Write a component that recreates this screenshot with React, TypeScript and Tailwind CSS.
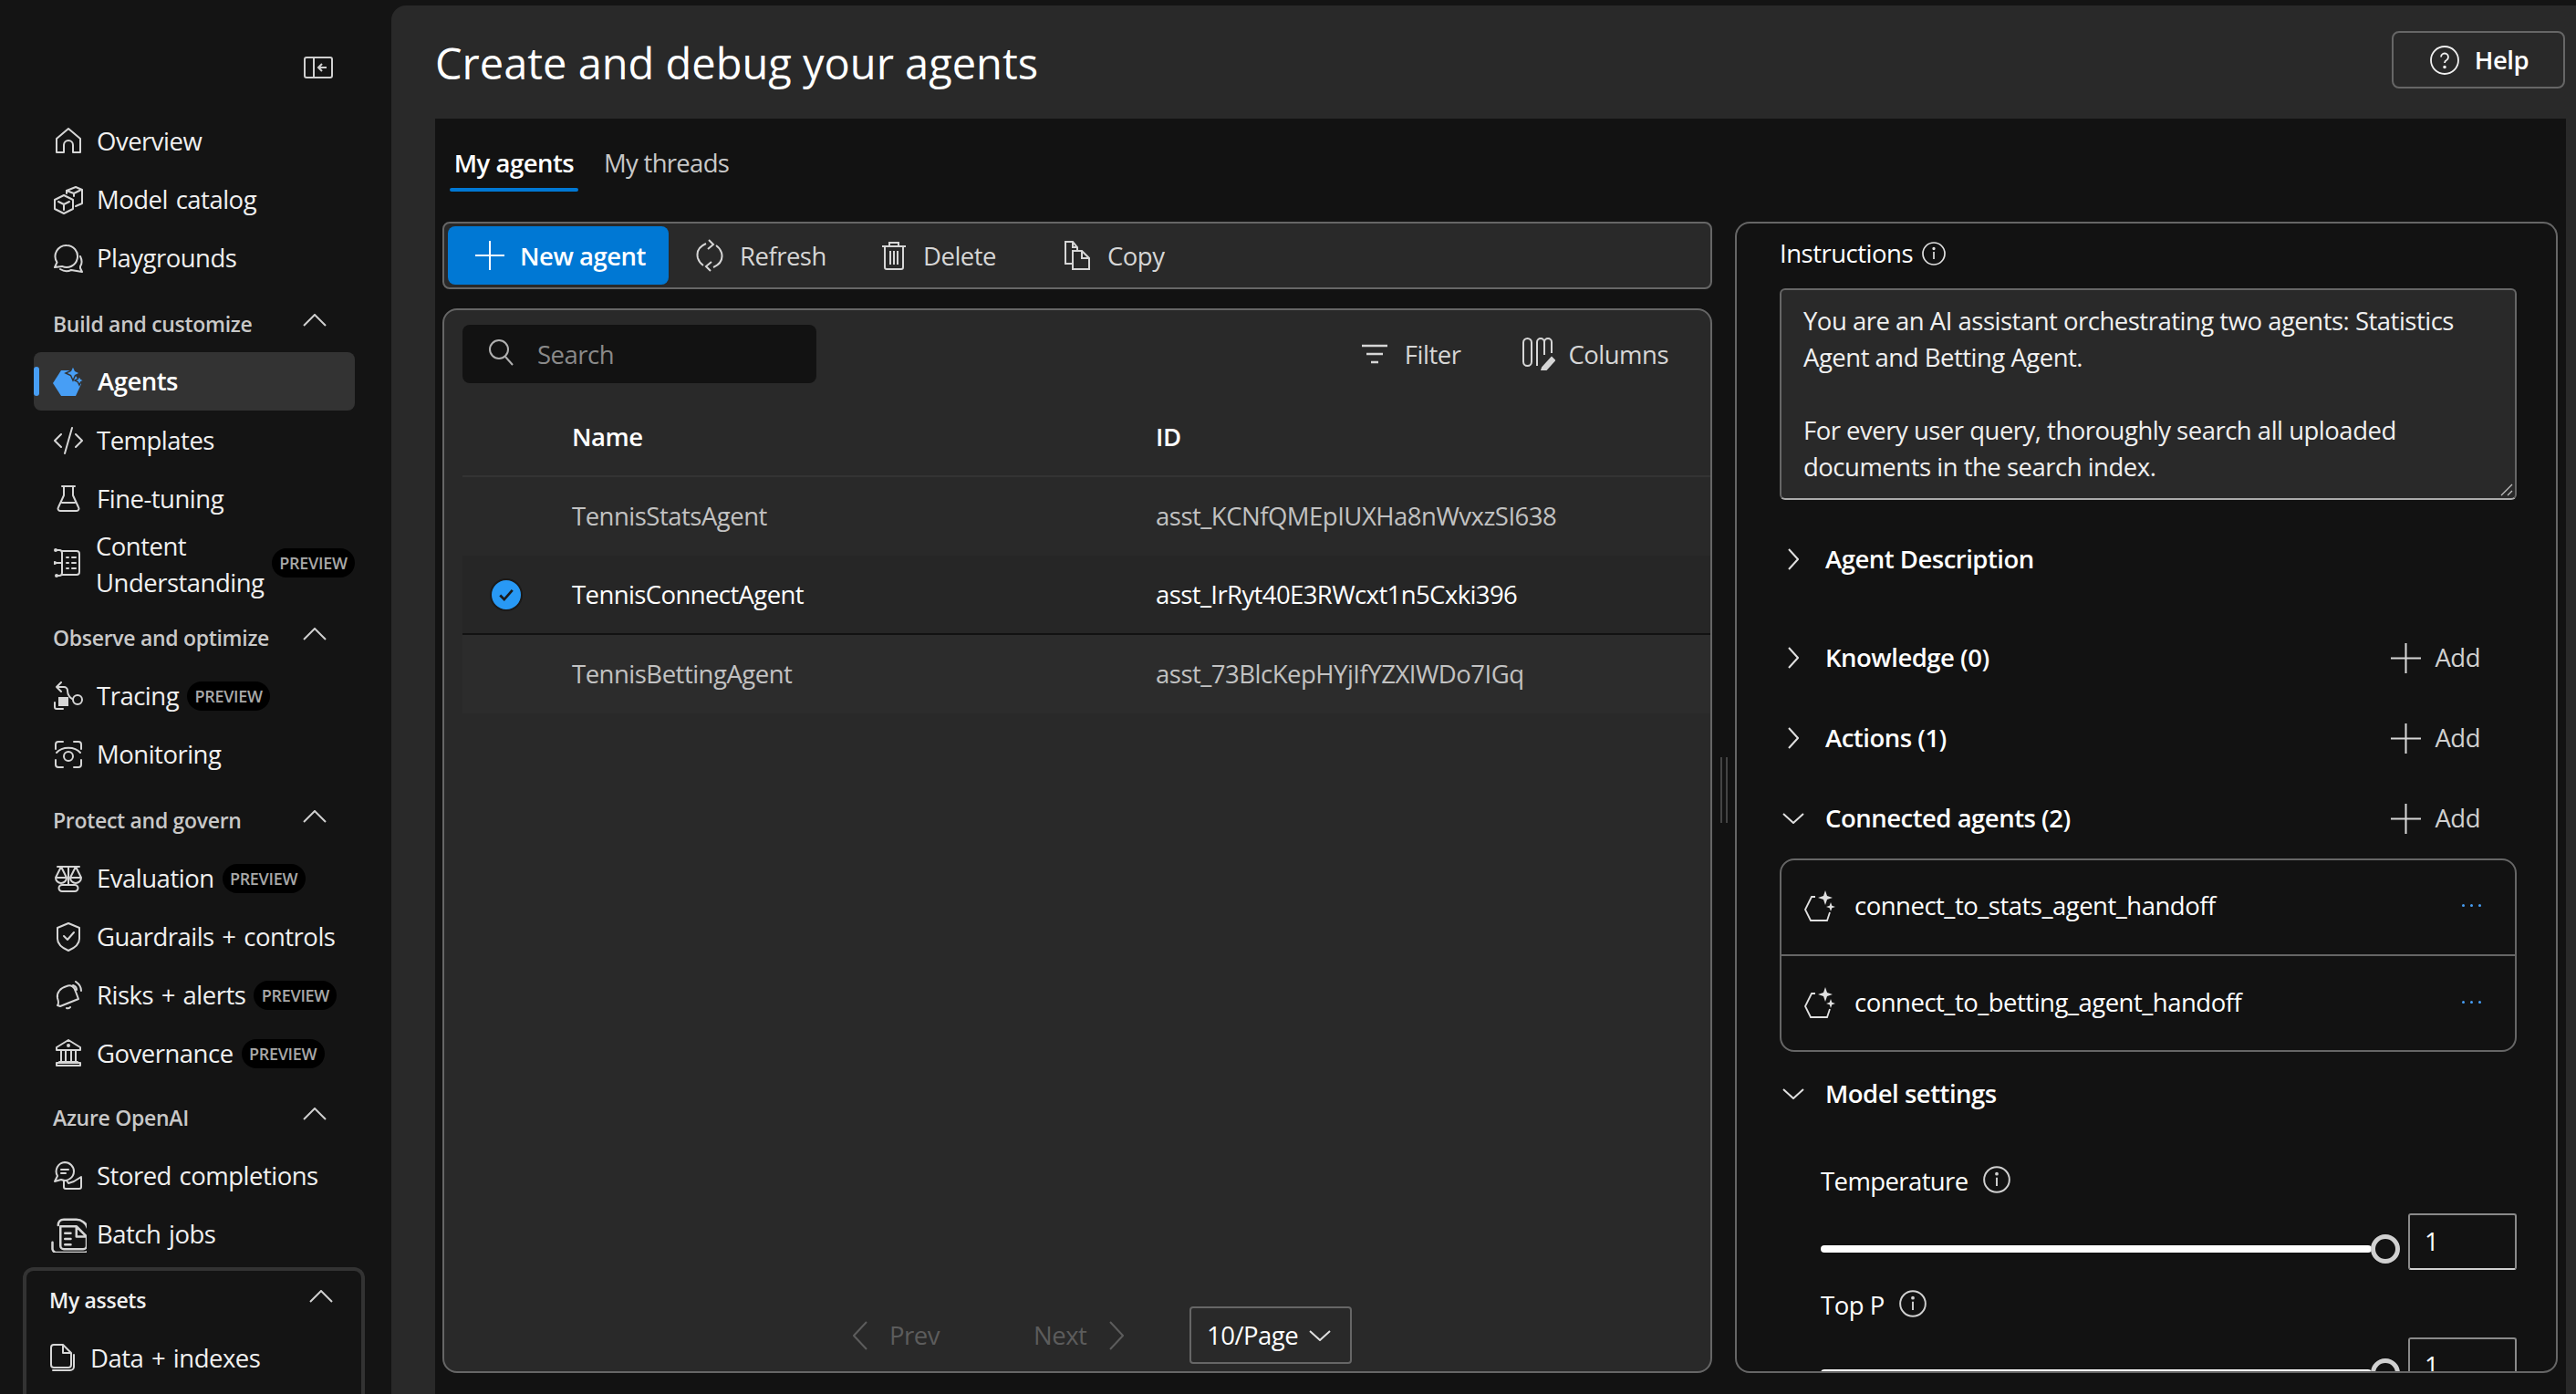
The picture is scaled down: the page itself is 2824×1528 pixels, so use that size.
import React from "react";

const Ic = ({ children, className = "w-8 h-8" }: { children: React.ReactNode; className?: string }) => (
  <svg viewBox="0 0 32 32" fill="none" stroke="currentColor" strokeWidth="2" strokeLinecap="round" strokeLinejoin="round" className={`shrink-0 ${className}`}>
    {children}
  </svg>
);

const Home = () => <Ic><path d="M3 28V13L16 2l13 11v15h-8v-8a5 5 0 0 0-10 0v8z" /></Ic>;
const Catalog = () => <Ic><path d="M1 16l10-5 10 5v10l-10 5-10-5z" /><path d="M5 18l6 3 6-3M11 21v6" /><path d="M14 9V6l10-4 7 3v15l-7 3" /><path d="M14 6l8 3 7-3.500M22 9v3" /></Ic>;
const Chat = () => <Ic><path d="M14 2a12 12 0 1 1-5 22.900L1 26l2.500-5.500A12 12 0 0 1 14 2z" /><path d="M7 28c3 2 8 3 12 1l12 2-2-4v-2c2-3 2-7 0-11" /></Ic>;
const Code = () => <Ic><path d="M8 9l-7 7 7 7M24 9l7 7-7 7M20 2l-8 28" /></Ic>;
const Flask = () => <Ic><path d="M9 2h14M11 2v10L5 25a2.500 2.500 0 0 0 2 4h18a2.500 2.500 0 0 0 2-4l-6-13V2M9 20h14" /></Ic>;
const ContentU = () => <Ic><path d="M3 2h3a3 3 0 0 1 3 3v22a3 3 0 0 1-3 3H3M1 16h8" /><path d="M9 3h16a3 3 0 0 1 3 3v20a3 3 0 0 1-3 3H9" /><path d="M14 10h2M20 10h4M14 16h2M20 16h4M14 22h2M20 22h4" /><circle cx="2" cy="2" r="1" fill="currentColor" /><circle cx="1" cy="16" r="1" fill="currentColor" /><circle cx="3" cy="30" r="1" fill="currentColor" /></Ic>;
const Tracing = () => <Ic><path d="M8 1L3 6l5 5M3 6h8a4 4 0 0 1 4 4c0 5 2 7 5 9" /><circle cx="26" cy="20" r="5" /><rect x="5" y="17" width="11" height="10" fill="currentColor" stroke="none" /><path d="M1 23v5a2 2 0 0 0 2 2h7" /></Ic>;
const Monitor = () => <Ic><path d="M10 2H5a3 3 0 0 0-3 3v5M22 2h5a3 3 0 0 1 3 3v5M10 30H5a3 3 0 0 1-3-3v-5M22 30h5a3 3 0 0 0 3-3v-5" /><path d="M3 14c6-7 20-7 26 0" /><circle cx="16" cy="18" r="5" /></Ic>;
const Scale = () => <Ic><path d="M4 3h24M16 3v20M9 23h14a3 3 0 0 1 0 7H9a3 3 0 0 1 0-7zM8 3L2 15h12zM24 3l-6 12h12zM2 15a6 6 0 0 0 12 0M18 15a6 6 0 0 0 12 0" /></Ic>;
const Shield = () => <Ic><path d="M16 1l12 5v12c0 6-5 10-12 13C9 28 4 24 4 18V6z" /><path d="M11 15l4 4 7-8" /></Ic>;
const Bell = () => <Ic><path d="M14 6c5-2 9 1 10 6l3 8-20 8-3-1c2-2 1-5 0-8-1-6 3-11 10-13z" /><path d="M14 30c2 1 3 0 4-1M24 1c3 2 6 5 6 10M21 5c3 1 4 3 4 5" /></Ic>;
const Bank = () => <Ic><path d="M16 1L3 9v3h26V9zM3 29v-3h26v3zM6 25h20M8 12v13M13 12v13M19 12v13M24 12v13" /><circle cx="16" cy="7" r="1" fill="currentColor" /></Ic>;
const Stored = () => <Ic><path d="M12 1a10 10 0 0 1 10 10 10 10 0 0 1-14 9l-7 2 3-6A10 10 0 0 1 12 1z" /><path d="M8 9h8M8 13h5" /><path d="M14 21l2 3 6-2 8-5v11a2 2 0 0 1-2 2H13a2 2 0 0 1-2-2v-7M30 17l-8 5" /></Ic>;
const Batch = () => (
  <Ic className="w-10 h-10"><path d="M7 8c0-3 2-5 5-5h11c4 0 9 3 10 8" /><path d="M9 9h14l9 9v8a3 3 0 0 1-3 3H12a3 3 0 0 1-3-3zM23 9v9h9M13 15h5M13 20h5M13 25h5" /><path d="M2 23v6a4 4 0 0 0 4 3h24a4 4 0 0 0 4-4v-6" /></Ic>
);
const Docs = () => <Ic><path d="M2 4a3 3 0 0 1 3-3h10l9 9v13a3 3 0 0 1-3 3H5a3 3 0 0 1-3-3zM15 1v9h9" /><path d="M4 29h19a4 4 0 0 0 4-4V12" /></Ic>;
const AgentFill = () => (
  <svg viewBox="0 0 34 34" className="w-[34px] h-[34px] shrink-0" fill="#479ef5">
    <path d="M9 5h12L31 20l-6 13H9L0 19z" />
    <path d="M22 0l2.500 5.500L30 8l-5.500 2.500L22 16l-2.500-5.500L14 8l5.500-2.500z" stroke="#333" strokeWidth="1.500" />
    <path d="M29 11l1.700 3.300L34 16l-3.300 1.700L29 21l-1.700-3.300L24 16l3.300-1.700z" stroke="#333" strokeWidth="1.500" />
  </svg>
);
const AgentOutline = () => (
  <svg viewBox="0 0 34 34" className="w-[34px] h-[34px] shrink-0" fill="none" stroke="#e0e0e0" strokeWidth="1.800">
    <path d="M12 7H8L1 21l6 12h18l3-9" />
    <path d="M23 0l2 6 6 2-6 2-2 6-2-6-6-2 6-2z" fill="#e0e0e0" stroke="none" />
    <path d="M29 13l1.300 3.700L34 18l-3.700 1.300L29 23l-1.300-3.700L24 18l3.700-1.300z" fill="#e0e0e0" stroke="none" />
  </svg>
);
const Up = ({ className = "" }: { className?: string }) => (
  <svg viewBox="0 0 26 14" fill="none" stroke="#d0d0d0" strokeWidth="2" className={`w-[26px] h-[14px] shrink-0 ${className}`}><path d="M1 13L13 1l12 12" /></svg>
);
const Right = () => (
  <svg viewBox="0 0 12 24" fill="none" stroke="#e0e0e0" strokeWidth="2" className="w-3 h-6 shrink-0"><path d="M1 1l10 11L1 23" /></svg>
);
const Down = () => (
  <svg viewBox="0 0 24 12" fill="none" stroke="#e0e0e0" strokeWidth="2" className="w-6 h-3 shrink-0"><path d="M1 1l11 10L23 1" /></svg>
);
const Plus = ({ c = "#d6d6d6", size = "w-8 h-8" }: { c?: string; size?: string }) => (
  <svg viewBox="0 0 32 32" fill="none" stroke={c} strokeWidth="2" className={`shrink-0 ${size}`}><path d="M16 0v32M0 16h32" /></svg>
);
const Info = ({ className = "w-[26px] h-[26px]", c = "#e0e0e0" }: { className?: string; c?: string }) => (
  <svg viewBox="0 0 26 26" fill="none" stroke={c} strokeWidth="1.700" className={`shrink-0 ${className}`}>
    <circle cx="13" cy="13" r="12" />
    <path d="M13 11v8" />
    <circle cx="13" cy="7.500" r="0.800" fill={c} />
  </svg>
);

const Preview = ({ className = "" }: { className?: string }) => (
  <span className={`inline-flex items-center justify-center w-[91px] h-8 rounded-full bg-black text-[#a8a8a8] text-[18px] font-semibold tracking-[-0.3px] [word-spacing:0] shrink-0 ${className}`}>PREVIEW</span>
);

const Item = ({ icon, label, badge, active }: { icon: React.ReactNode; label: string; badge?: boolean; active?: boolean }) => (
  <div className={`relative flex items-center h-16 pl-[22px] rounded-lg text-[27.500px] tracking-[-0.5px] [word-spacing:2px] whitespace-nowrap ${active ? "-mt-px mb-px bg-[#333333] text-white font-semibold" : "text-[#f0f0f0]"}`}>
    {active && <span className="absolute left-0 top-4 w-[6px] h-8 rounded-full bg-[#479ef5]" />}
    <span className={`w-8 flex justify-center ${active ? "mr-4" : "mr-[15px] text-[#d6d6d6]"}`}>{icon}</span>
    <span>{label}</span>
    {badge && <Preview className="ml-[9px]" />}
  </div>
);

const Section = ({ label, className = "mt-2" }: { label: string; className?: string }) => (
  <div className={`flex items-center justify-between h-16 pl-[21px] pr-[31px] text-[23px] font-semibold tracking-[-0.3px] text-[#c8c8c8] whitespace-nowrap ${className}`}>
    <span>{label}</span>
    <Up className="-mt-2" />
  </div>
);

const Sidebar = () => (
  <aside className="w-[429px] shrink-0 flex flex-col overflow-hidden">
    <div className="h-[123px] shrink-0 flex justify-end pr-[64px] pt-[62px]">
      <svg viewBox="0 0 32 24" fill="none" stroke="#d0d0d0" strokeWidth="2" className="w-8 h-6"><rect x="1" y="1" width="30" height="22" rx="2" /><path d="M11 1v22M25 12H16M20 8l-4 4 4 4" /></svg>
    </div>
    <div className="w-[389px] pl-[37px]">
      <Item icon={<Home />} label="Overview" />
      <Item icon={<Catalog />} label="Model catalog" />
      <Item icon={<Chat />} label="Playgrounds" />
      <Section label="Build and customize" />
      <Item icon={<AgentFill />} label="Agents" active />
      <Item icon={<Code />} label="Templates" />
      <Item icon={<Flask />} label="Fine-tuning" />
      <div className="flex items-center h-20 pl-[22px] text-[27.500px] tracking-[-0.5px] leading-[40px] text-[#f0f0f0]">
        <span className="w-8 mr-[14px] text-[#d6d6d6] -mt-1"><ContentU /></span>
        <span className="flex-1 whitespace-nowrap">Content<br />Understanding</span>
        <Preview className="-mt-1" />
      </div>
      <Section label="Observe and optimize" />
      <Item icon={<Tracing />} label="Tracing" badge />
      <Item icon={<Monitor />} label="Monitoring" />
      <Section label="Protect and govern" />
      <Item icon={<Scale />} label="Evaluation" badge />
      <Item icon={<Shield />} label="Guardrails + controls" />
      <Item icon={<Bell />} label="Risks + alerts" badge />
      <Item icon={<Bank />} label="Governance" badge />
      <Section label="Azure OpenAI" className="mt-[6px]" />
      <Item icon={<Stored />} label="Stored completions" />
      <Item icon={<Batch />} label="Batch jobs" />
    </div>
    <div className="ml-[25px] w-[375px] mt-1 flex-1 border-4 border-b-0 border-[#333333] rounded-t-xl">
      <div className="flex items-center justify-between h-[64px] pl-[25px] pr-[31px] text-[23px] font-semibold tracking-[-0.3px] text-[#f0f0f0]">
        <span>My assets</span>
        <Up className="-mt-2" />
      </div>
      <div className="flex items-center h-16 pl-[25px] text-[27.500px] tracking-[-0.5px] [word-spacing:2px] text-[#f0f0f0] whitespace-nowrap">
        <span className="w-[26px] mr-[19px] text-[#d6d6d6]"><Docs /></span>
        <span>Data + indexes</span>
      </div>
    </div>
  </aside>
);

const ToolBtn = ({ icon, label, w }: { icon: React.ReactNode; label: string; w: string }) => (
  <div className={`flex items-center text-[27.500px] font-medium tracking-[-0.5px] text-[#d6d6d6] whitespace-nowrap ${w}`}>
    {icon}
    <span className="pt-[2px]">{label}</span>
  </div>
);

const Row = ({ name, id, selected, dim }: { name: string; id: string; selected?: boolean; dim?: boolean }) => (
  <div className={`flex items-center text-[27.500px] ${selected ? "h-[87px] bg-[#262626] border-b-2 border-[#121212] text-white tracking-[-0.6px]" : `h-[86px] ${dim ? "bg-[#2c2c2c]" : ""} text-[#c2c2c2] tracking-[-0.5px]`}`}>
    <div className="w-[120px] pl-[30px] shrink-0">
      {selected && (
        <span className="flex items-center justify-center w-9 h-9 rounded-full bg-[#2899f5] border-2 border-[#1a1a1a]">
          <svg viewBox="0 0 16 16" fill="none" stroke="#1a1a1a" strokeWidth="2.400" className="w-[18px] h-[18px]"><path d="M2 8.500l4 4L14 3.500" /></svg>
        </span>
      )}
    </div>
    <div className="w-[640px] shrink-0">{name}</div>
    <div>{id}</div>
  </div>
);

const AgentsTable = () => (
  <div className="flex-1 min-h-0 flex flex-col border-2 border-[#666666] rounded-2xl bg-[#292929] pl-5 pt-4">
    <div className="flex items-center h-16 shrink-0">
      <div className="flex items-center w-[388px] h-16 rounded-lg bg-[#121212] pl-7 text-[27.500px] tracking-[-0.5px] text-[#8a8a8a]">
        <svg viewBox="0 0 28 30" fill="none" stroke="#b0b0b0" strokeWidth="2" className="w-7 h-[30px] mr-[26px] -mt-1 shrink-0"><circle cx="12" cy="12" r="10" /><path d="M19 20l8 9" /></svg>
        <span className="pt-[2px]">Search</span>
      </div>
      <div className="ml-auto flex items-center">
        <ToolBtn w="mr-[68px]" label="Filter" icon={
          <svg viewBox="0 0 28 22" fill="none" stroke="#d6d6d6" strokeWidth="2.500" className="w-7 h-[22px] mr-[19px]"><path d="M0 2h28M5 11h18M10 20h8" /></svg>
        } />
        <ToolBtn w="mr-[46px]" label="Columns" icon={
          <svg viewBox="0 0 36 36" fill="none" stroke="#d6d6d6" strokeWidth="2" className="w-9 h-9 mr-[14px]"><rect x="1" y="1" width="9" height="30" rx="4.500" /><path d="M16 31V5a4 4 0 0 1 8 0v14M24 5a4 4 0 0 1 8 0v12" /><path d="M22 33l10-11 3 3-9 10-5 1z" fill="#d6d6d6" /></svg>
        } />
      </div>
    </div>
    <div className="flex items-center h-[86px] mt-[17px] border-b-2 border-[#333333] text-[27.500px] font-semibold tracking-[-0.5px] text-white shrink-0">
      <div className="w-[120px]" />
      <div className="w-[640px]">Name</div>
      <div>ID</div>
    </div>
    <Row name="TennisStatsAgent" id="asst_KCNfQMEpIUXHa8nWvxzSI638" />
    <Row name="TennisConnectAgent" id="asst_IrRyt40E3RWcxt1n5Cxki396" selected />
    <Row name="TennisBettingAgent" id="asst_73BlcKepHYjIfYZXIWDo7IGq" dim />
    <div className="mt-auto mb-2 h-[63px] flex items-center pl-[428px] text-[27.500px] tracking-[-0.5px] text-[#5c5c5c]">
      <svg viewBox="0 0 16 32" fill="none" stroke="#5c5c5c" strokeWidth="2" className="w-4 h-8 mr-[24px]"><path d="M15 1L1 16l14 15" /></svg>
      <span className="w-[158px]">Prev</span>
      <span className="w-[83px]">Next</span>
      <svg viewBox="0 0 16 32" fill="none" stroke="#5c5c5c" strokeWidth="2" className="w-4 h-8"><path d="M1 1l14 15L1 31" /></svg>
      <div className="ml-[72px] flex items-center w-[178px] h-[63px] border-2 border-[#666666] rounded-[4px] pl-[17px] text-white">
        <span className="w-[112px]">10/Page</span>
        <Down />
      </div>
    </div>
  </div>
);

const Expand = ({ label, open, add, className }: { label: string; open?: boolean; add?: boolean; className: string }) => (
  <div className={`flex items-center h-16 text-[27.500px] font-semibold tracking-[-0.5px] text-white whitespace-nowrap ${className}`}>
    <span className="w-[50px] flex justify-start pl-[3px]">{open ? <Down /> : <span className="pl-[6px]"><Right /></span>}</span>
    <span>{label}</span>
    {add && (
      <span className="ml-auto mr-[40px] flex items-center text-[#d0d0d0] font-medium">
        <Plus size="w-[33px] h-[33px] mr-[15px]" />
        <span>Add</span>
      </span>
    )}
  </div>
);

const ConnRow = ({ label, border }: { label: string; border?: boolean }) => (
  <div className={`flex items-center h-[105px] pl-[25px] pr-[37px] text-[27.500px] tracking-[-0.5px] text-white ${border ? "border-b-2 border-[#666666]" : ""}`}>
    <span className="-mt-1 mr-[21px]"><AgentOutline /></span>
    <span className="-mt-1">{label}</span>
    <span className="ml-auto flex gap-[6px] -mt-1">
      <i className="w-[3px] h-[3px] rounded-full bg-[#479ef5]" />
      <i className="w-[3px] h-[3px] rounded-full bg-[#479ef5]" />
      <i className="w-[3px] h-[3px] rounded-full bg-[#479ef5]" />
    </span>
  </div>
);

const SliderRow = ({ className = "" }: { className?: string }) => (
  <div className={`flex items-start shrink-0 pl-[45px] ${className}`}>
    <div className="flex-1 flex items-center h-8 mt-[23px]">
      <div className="flex-1 h-2 rounded-full bg-white" />
      <div className="w-8 h-8 -ml-px rounded-full border-[5px] border-[#d0d0d0] bg-[#121212]" />
    </div>
    <div className="ml-[9px] w-[119px] h-[62px] border-2 border-[#d0d0d0] border-t-[#8a8a8a] border-x-[#8a8a8a] rounded-[3px] pl-[16px] leading-[58px] text-[27.500px] text-white">1</div>
  </div>
);

const SidePanel = () => (
  <section className="w-[902px] shrink-0 border-2 border-[#666666] rounded-2xl overflow-hidden pl-[47px] pr-[43px] pt-[13px]">
    <div className="flex items-center h-10 text-[27.500px] tracking-[-0.5px] text-white">
      <span>Instructions</span>
      <Info className="w-[26px] h-[26px] ml-[10px]" />
    </div>
    <div className="relative mt-[18px] h-[232px] bg-[#292929] border-2 border-[#666666] border-b-[#aaaaaa] rounded-md pl-[24px] pt-[14px] text-[27.500px] leading-[40px] tracking-[-0.5px] text-[#f0f0f0] whitespace-nowrap">
      You are an AI assistant orchestrating two agents: Statistics<br />
      Agent and Betting Agent.<br />
      <br />
      For every user query, thoroughly search all uploaded<br />
      documents in the search index.
      <svg viewBox="0 0 14 14" fill="none" stroke="#c0c0c0" strokeWidth="1.300" className="absolute right-[2px] bottom-[2px] w-[14px] h-[14px]"><path d="M1 13L13 1M8 13l5-5" /></svg>
    </div>
    <Expand label="Agent Description" className="mt-[33px]" />
    <Expand label="Knowledge (0)" add className="mt-[44px]" />
    <Expand label="Actions (1)" add className="mt-[24px]" />
    <Expand label="Connected agents (2)" open add className="mt-[24px]" />
    <div className="mt-3 h-[212px] border-2 border-[#666666] rounded-2xl">
      <ConnRow label="connect_to_stats_agent_handoff" border />
      <ConnRow label="connect_to_betting_agent_handoff" />
    </div>
    <Expand label="Model settings" open className="mt-[14px]" />
    <div className="flex items-center h-10 mt-[44px] pl-[45px] text-[27.500px] font-medium tracking-[-0.6px] text-white">
      <span>Temperature</span>
      <Info className="w-[30px] h-[30px] ml-[16px] -mt-1" c="#d0d0d0" />
    </div>
    <SliderRow className="mt-[15px]" />
    <div className="flex items-center h-10 mt-[19px] pl-[45px] text-[27.500px] font-medium tracking-[-0.5px] text-white">
      <span>Top P</span>
      <Info className="w-[30px] h-[30px] ml-[16px] -mt-1" c="#d0d0d0" />
    </div>
    <SliderRow className="mt-[15px]" />
  </section>
);

export default function App() {
  return (
    <div className="flex w-[2824px] h-[1528px] overflow-hidden bg-[#141414] font-['Open_Sans',sans-serif]">
      <Sidebar />
      <main className="flex-1 min-w-0 mt-[6px] flex flex-col bg-[#292929] rounded-tl-2xl">
        <header className="h-[124px] shrink-0 flex justify-between items-start pl-12 pr-3">
          <h1 className="mt-[27px] leading-[72px] text-[47px] font-medium text-white">Create and debug your agents</h1>
          <button className="mt-[28px] w-[190px] h-[63px] flex items-center justify-center gap-[17px] pl-[2px] border-2 border-[#666666] rounded-lg text-[27.500px] font-semibold tracking-[-0.5px] text-white">
            <svg viewBox="0 0 32 32" fill="none" stroke="#f0f0f0" strokeWidth="1.800" className="w-8 h-8"><circle cx="16" cy="16" r="15" /><path d="M12 12.500a4 4 0 1 1 6 3.500c-1.500.8-2 1.600-2 3" /><circle cx="16" cy="23.500" r="0.900" fill="#f0f0f0" /></svg>
            Help
          </button>
        </header>
        <div className="relative flex-1 min-h-0 ml-12 mr-[11px] bg-[#121212] flex flex-col pl-2 pr-[10px] pb-[23px]">
          <div className="h-[113px] shrink-0 pl-2 pt-[29px]">
            <div className="flex items-start gap-[33px] text-[27.500px] tracking-[-0.5px] leading-10">
              <div className="flex flex-col items-center w-[141px] font-semibold text-white whitespace-nowrap">
                <span>My agents</span>
                <span className="w-full h-1 mt-[7px] rounded-full bg-[#0078d4]" />
              </div>
              <span className="-ml-[5px] tracking-[-0.7px] text-[#c8c8c8]">My threads</span>
            </div>
          </div>
          <div className="flex-1 min-h-0 flex gap-[25px]">
            <div className="w-[1392px] shrink-0 flex flex-col gap-[21px]">
              <div className="h-[74px] shrink-0 flex items-center border-2 border-[#666666] rounded-lg bg-[#292929] pl-1">
                <div className="flex items-center w-[242px] h-16 rounded-lg bg-[#0078d4] pl-[30px] text-[27.500px] font-semibold tracking-[-0.5px] text-white whitespace-nowrap">
                  <Plus c="#ffffff" size="w-8 h-8 mr-[17px]" />
                  <span className="pt-[2px]">New agent</span>
                </div>
                <ToolBtn w="w-[207px] pl-[29px]" label="Refresh" icon={
                  <svg viewBox="0 0 32 36" fill="none" stroke="#d6d6d6" strokeWidth="2" className="w-8 h-9 mr-[17px]"><path d="M12 5C5 8 1 13 3 21c1 3 3 6 6 8M20 31c7-3 11-8 9-16-1-3-3-6-6-8M15 1l5 5-6 5M17 35l-5-5 6-5" /></svg>
                } />
                <ToolBtn w="w-[208px] pl-[26px]" label="Delete" icon={
                  <svg viewBox="0 0 28 32" fill="none" stroke="#d6d6d6" strokeWidth="2" className="w-7 h-8 mr-[18px]"><path d="M1 6h26M9 5V2h10v3M4 6v23a2 2 0 0 0 2 2h16a2 2 0 0 0 2-2V6M10 11v15M14 11v15M18 11v15" /></svg>
                } />
                <ToolBtn w="pl-[19px]" label="Copy" icon={
                  <svg viewBox="0 0 28 32" fill="none" stroke="#d6d6d6" strokeWidth="2" className="w-7 h-8 mr-[19px]"><path d="M9 25H1V1h8l5 6v4M9 1v6h5" /><path d="M9 11h10l8 8v12H9zM19 11v8h8" /></svg>
                } />
              </div>
              <AgentsTable />
            </div>
            <SidePanel />
          </div>
          <span className="absolute left-[1409px] top-[700px] w-2 h-[72px] border-x-2 border-[#444444]" />
        </div>
      </main>
    </div>
  );
}
